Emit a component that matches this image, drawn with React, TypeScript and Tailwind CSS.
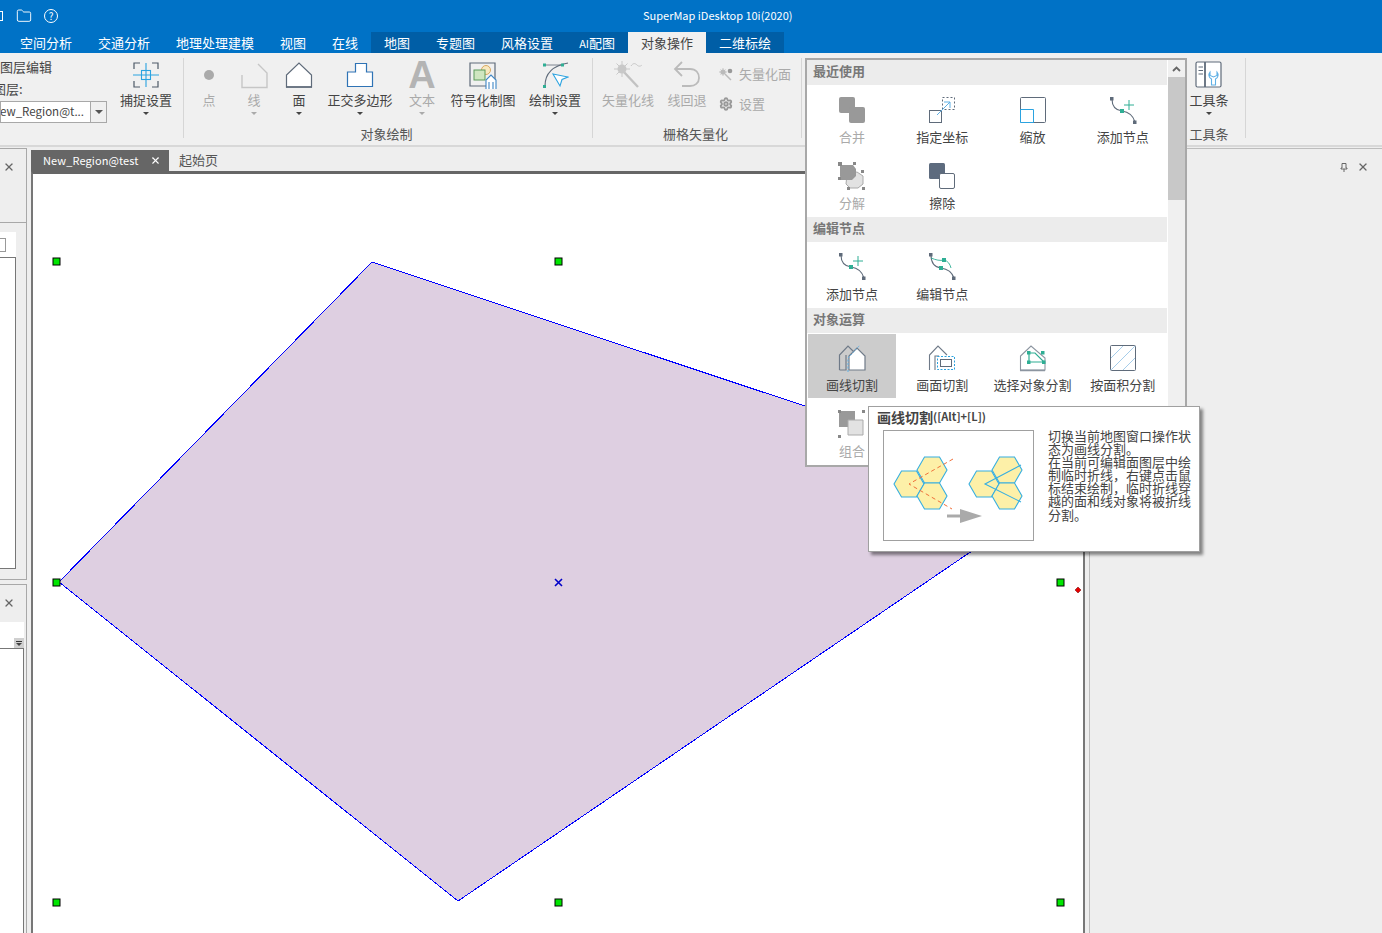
import { Folder, Settings, X } from 'lucide-react'
import type { ReactNode } from 'react'

const TABS = [
  { label: '空间分析' },
  { label: '交通分析' },
  { label: '地理处理建模' },
  { label: '视图' },
  { label: '在线' },
  { label: '地图', dark: true },
  { label: '专题图', dark: true },
  { label: '风格设置', dark: true },
  { label: '配图', prefix: 'AI', dark: true },
  { label: '对象操作', active: true },
  { label: '二维标绘', dark: true },
]

const TOOLTIP_LINES = [
  '切换当前地图窗口操作状',
  '态为画线分割。',
  '在当前可编辑面图层中绘',
  '制临时折线，右键点击鼠',
  '标结束绘制，临时折线穿',
  '越的面和线对象将被折线',
  '分割。',
]

const SLATE = '#5f6b7a'
const TEAL = '#2fae94'
const BLUE = '#2ba3e0'

function Icon({ w = 28, h = 28, children }: { w?: number; h?: number; children: ReactNode }) {
  return (
    <svg width={w} height={h} viewBox={`0 0 ${w} ${h}`} fill="none" className="block">
      {children}
    </svg>
  )
}

const SnapIcon = () => (
  <Icon>
    <path d="M8 2H2V8M20 2H26V8M2 20V26H8M26 20V26H20" stroke="#4e5a68" strokeWidth="1.2" />
    <path d="M14 2V26M1 14H27" stroke={BLUE} strokeWidth="1.1" />
    <rect x="9.5" y="9.5" width="9" height="9" stroke={BLUE} strokeWidth="1.1" />
  </Icon>
)
const PointIcon = () => (
  <Icon>
    <circle cx="14" cy="14" r="5" fill="#aaa" />
  </Icon>
)
const LineIcon = () => (
  <Icon>
    <path d="M2 14V26.5H27V12L18 3" stroke="#c6c6c6" strokeWidth="1.4" />
  </Icon>
)
const FaceIcon = () => (
  <Icon>
    <path d="M1.5 26V14L14 2L26.5 14V26Z" fill="#fff" stroke={SLATE} strokeWidth="1.2" />
    <path d="M1 26H27" stroke={SLATE} strokeWidth="1.6" />
  </Icon>
)
const OrthoIcon = () => (
  <Icon>
    <path d="M1.5 25.5V11H9.5V2.5H20.5V11H26.5V25.5Z" fill="#fff" stroke="#2f73b5" strokeWidth="1.2" />
  </Icon>
)
const SymbolIcon = () => (
  <Icon>
    <path d="M26 19V2H1V25H17" stroke={SLATE} strokeWidth="1.2" />
    <circle cx="17" cy="9" r="4.5" fill="#f8e8c0" stroke="#d9a860" />
    <rect x="5" y="9" width="11" height="10" fill="#cfe6c0" stroke="#5b9a5a" />
    <path d="M17 28V19L22 14L27 19V28M20 28V21M24 28V21" stroke="#3f87c5" strokeWidth="1.1" fill="#fff" />
  </Icon>
)
const DrawSetIcon = () => (
  <Icon>
    <path d="M4 25C4 13 10 5 27 2" stroke={SLATE} strokeWidth="1.2" />
    <path d="M2 4H21" stroke={SLATE} strokeWidth="0.8" />
    <rect x="2" y="2.5" width="3" height="3" fill={TEAL} />
    <rect x="20" y="2.5" width="3" height="3" fill={TEAL} />
    <rect x="2" y="24" width="3" height="3" fill={TEAL} />
    <path d="M12 13L27 16L21 18.5L19 25Z" fill="#fff" stroke={BLUE} strokeWidth="1.1" />
  </Icon>
)
const WandIcon = () => (
  <Icon>
    <path d="M9 10L24 26" stroke="#c2c2c2" strokeWidth="2.4" />
    <circle cx="8" cy="8" r="4.5" fill="#c8c8c8" />
    <path d="M8 0V16M0 8H16M2.5 2.5L13.5 13.5M13.5 2.5L2.5 13.5" stroke="#c8c8c8" />
    <path d="M17 5C19 2 21 2 23 4C25 6 27 5 28 4" stroke="#c8c8c8" />
  </Icon>
)
const SmallWandIcon = () => (
  <svg width="14" height="14" viewBox="0 0 14 14" fill="none" className="block">
    <circle cx="4" cy="5" r="2.6" fill="#bbb" />
    <path d="M4 1V9M0 5H8M1.500 2.500L6.500 7.500M6.500 2.500L1.500 7.500" stroke="#bbb" strokeWidth="0.8" />
    <path d="M6 7L12 13" stroke="#bbb" strokeWidth="1.500" />
    <circle cx="11" cy="4" r="2.300" fill="#999" />
  </svg>
)
const UndoIcon = () => (
  <Icon>
    <path d="M2 8H17C23 8 26 12 26 17C26 22 22 25 17 25H9" stroke="#bbb" strokeWidth="1.8" />
    <path d="M9 1L2 8L9 15" stroke="#bbb" strokeWidth="1.8" />
  </Icon>
)
const ToolbarIcon = () => (
  <Icon>
    <rect x="1" y="1" width="25" height="25" rx="1.5" fill="#fff" stroke={SLATE} strokeWidth="1.2" />
    <path d="M10 1V26" stroke={SLATE} strokeWidth="1.8" />
    <path d="M3.5 6H8M3.5 9.5H8M3.5 13H8" stroke={SLATE} />
    <path d="M15 11A4.500 4.500 0 0 0 16.500 18V24H20.500V18A4.500 4.500 0 0 0 22 11V14.500L18.500 16L15 14.500Z" stroke="#5fb0e5" strokeWidth="1.1" />
  </Icon>
)
const MergeIcon = () => (
  <Icon>
    <rect x="1" y="1" width="16" height="16" rx="2" fill="#999" />
    <rect x="11" y="11" width="16" height="16" rx="2" fill="#999" />
  </Icon>
)
const AssignIcon = () => (
  <Icon>
    <rect x="1.500" y="14.500" width="12" height="12" stroke={SLATE} fill="#fff" />
    <rect x="14.500" y="1.500" width="12" height="12" stroke={SLATE} strokeDasharray="2 2" />
    <path d="M9 19L22 6M16 6H22V12" stroke="#5fb0e5" />
  </Icon>
)
const ScaleIcon = () => (
  <Icon>
    <rect x="1.500" y="1.500" width="25" height="25" rx="1" stroke={SLATE} />
    <path d="M1.500 13.500H14.500V26.500H1.500Z" stroke={BLUE} />
  </Icon>
)
const AddNodeIcon = () => (
  <Icon>
    <path d="M3 3C3 9 5 14 13 15C20 16 24 19 26 26" stroke={SLATE} strokeWidth="1.1" />
    <rect x="1" y="1" width="3.5" height="3.5" fill={SLATE} />
    <rect x="24" y="24.500" width="3.5" height="3.5" fill={SLATE} />
    <rect x="11" y="13" width="4" height="4" fill={TEAL} />
    <path d="M20 4V14M15 9H25" stroke={TEAL} />
  </Icon>
)
const EditNodeIcon = () => (
  <Icon>
    <path d="M3 3C3 9 5 15 13 16C20 17 24 20 26 26" stroke={SLATE} strokeWidth="1.1" />
    <path d="M3 6C8 8 12 9 16 8C20 9 22 12 23 16" stroke={TEAL} strokeWidth="0.9" />
    <rect x="1" y="1" width="3.500" height="3.500" fill={SLATE} />
    <rect x="24" y="24.500" width="3.500" height="3.500" fill={SLATE} />
    <rect x="11" y="14" width="4" height="4" fill={TEAL} />
    <rect x="14" y="6" width="4" height="4" fill={TEAL} />
  </Icon>
)
const SplitIcon = () => (
  <Icon>
    <path d="M9 12L19 10L25 14V22L20 26H12L8 22Z" fill="#e2e2e2" stroke="#aaa" />
    <path d="M2 3H15L18 7V14L14 18H3L2 14Z" fill="#999" />
    <rect x="0" y="0" width="4" height="4" fill="#888" />
    <rect x="15" y="0" width="3" height="3" fill="#888" />
    <rect x="23" y="8" width="3" height="3" fill="#888" />
    <rect x="0" y="15" width="3" height="3" fill="#888" />
    <rect x="9" y="25" width="3" height="3" fill="#888" />
    <rect x="24" y="25" width="3" height="3" fill="#888" />
  </Icon>
)
const EraseIcon = () => (
  <Icon>
    <rect x="1" y="1" width="16" height="16" rx="1.500" fill="#5d6b7e" />
    <rect x="11.500" y="11.500" width="15" height="15" rx="1.500" fill="#fff" stroke={SLATE} />
  </Icon>
)
const LineCutIcon = () => (
  <Icon>
    <path d="M1.500 26V11L10 2L17 9" stroke="#6f7a88" strokeWidth="1.2" />
    <path d="M1.500 26H8V11" stroke="#6f7a88" strokeWidth="1.2" />
    <path d="M11 26V12L19 4L27 12V26Z" fill="#fff" stroke="#6f7a88" strokeWidth="1.2" />
    <path d="M10 28V14L22 1" stroke="#5fb0e5" strokeDasharray="2 1.500" />
  </Icon>
)
const FaceCutIcon = () => (
  <Icon>
    <path d="M1.500 26V11L10 2L19 11M7 26V12H11" stroke="#6f7a88" strokeWidth="1.1" />
    <rect x="9.500" y="12.500" width="17" height="13" fill="#fff" stroke={BLUE} strokeDasharray="2 1.500" />
    <rect x="12.500" y="15.500" width="11" height="7" stroke={SLATE} />
  </Icon>
)
const SelectCutIcon = () => (
  <Icon>
    <path d="M1.500 26V12L12 2L26 14V26Z" fill="#fff" stroke="#8c95a0" strokeWidth="1.1" />
    <path d="M1 26.500H26" stroke="#8c95a0" strokeWidth="1.500" />
    <path d="M10 9H16L25 18H10Z" stroke={TEAL} strokeWidth="1.200" />
    <rect x="8" y="7" width="3.500" height="3.500" fill={TEAL} />
    <rect x="22" y="7" width="3.500" height="3.500" fill={TEAL} />
    <rect x="8" y="16.500" width="3.500" height="3.500" fill={TEAL} />
    <rect x="23" y="16.500" width="3.500" height="3.500" fill={TEAL} />
  </Icon>
)
const AreaCutIcon = () => (
  <Icon>
    <rect x="1.500" y="1.500" width="25" height="25" rx="1" stroke={SLATE} />
    <path d="M2 14L14 2M2 26L26 2M14 26L26 14" stroke="#a6cdea" />
  </Icon>
)
const CombineIcon = () => (
  <Icon>
    <rect x="1" y="1" width="16" height="16" fill="#999" />
    <path d="M10 10H25V25H10Z" fill="#e2e2e2" stroke="#aaa" />
    <rect x="0" y="0" width="3" height="3" fill="#888" />
    <rect x="24" y="0" width="3" height="3" fill="#888" />
    <rect x="0" y="25" width="3" height="3" fill="#888" />
  </Icon>
)

function Caret({ dim }: { dim?: boolean }) {
  return (
    <span className={`block h-0 w-0 border-x-[3px] border-t-[3px] border-x-transparent ${dim ? 'border-t-[#aaa]' : 'border-t-[#444]'}`} />
  )
}

function RibbonButton({ label, width, dim, caret, children }: {
  label: string
  width: string
  dim?: boolean
  caret?: boolean
  children: ReactNode
}) {
  return (
    <div className={`flex shrink-0 flex-col items-center pt-[8px] ${width}`}>
      <div className="flex h-[28px] items-center justify-center">{children}</div>
      <div className={`mt-[2px] whitespace-nowrap text-[13px] leading-[18px] ${dim ? 'text-[#aaa]' : 'text-[#444]'}`}>{label}</div>
      {caret && <div className="mt-[3px]"><Caret dim={dim} /></div>}
    </div>
  )
}

function RibbonGroup({ label, width, labelClass, children }: {
  label: string
  width: string
  labelClass?: string
  children: ReactNode
}) {
  return (
    <div className={`flex h-[92px] shrink-0 flex-col justify-between ${width}`}>
      <div className="flex items-start">{children}</div>
      <div className={`mb-[2px] text-center text-[13px] leading-[18px] text-[#555] ${labelClass ?? ''}`}>{label}</div>
    </div>
  )
}

const RibbonSep = () => <div className="mt-[5px] h-[80px] w-[1px] shrink-0 bg-[#d6d6d6]" />

function MenuHeader({ label }: { label: string }) {
  return <div className="h-[25px] w-[360px] bg-[#ececec] pl-[6px] text-[13px] font-bold leading-[22px] text-[#777]">{label}</div>
}

function MenuItem({ label, dim, hover, tight, children }: {
  label: string
  dim?: boolean
  hover?: boolean
  tight?: boolean
  children: ReactNode
}) {
  return (
    <div className={`flex h-[66px] w-[90px] flex-col items-center ${hover ? 'border border-white bg-[#cccccc] pt-[10px]' : tight ? 'pt-[10px]' : 'pt-[11px]'}`}>
      {children}
      <div className={`whitespace-nowrap text-[13px] leading-[18px] ${tight ? 'mt-[5px]' : 'mt-[4px]'} ${dim ? 'text-[#aaa]' : 'text-[#444]'}`}>{label}</div>
    </div>
  )
}

function CloseX() {
  return <X size={12} strokeWidth={2.6} className="text-[#666]" />
}

function Handle({ x, y }: { x: number; y: number }) {
  return <rect x={x - 3.5} y={y - 3.5} width="7" height="7" fill="#00e600" stroke="#000" strokeWidth="1" />
}

function MapCanvas() {
  // page coords minus the canvas origin (33, 174)
  const ox = 33
  const oy = 174
  const pts = [[372, 262], [1060, 491], [458, 901], [59, 582]]
    .map(([x, y]) => `${x - ox},${y - oy}`)
    .join(' ')
  const handles = [[56, 261], [558, 261], [56, 582], [1060, 582], [56, 902], [558, 902], [1060, 902]]
  return (
    <svg width="1050" height="759" viewBox="0 0 1050 759" className="block">
      <polygon points={pts} fill="#decfe1" stroke="#0000ff" strokeWidth="1" shapeRendering="crispEdges" />
      {handles.map(([x, y]) => <Handle key={`${x}-${y}`} x={x - ox + 0.5} y={y - oy + 0.5} />)}
      <path d={`M${558 - ox - 3} ${582 - oy - 3}l7 7m0 -7l-7 7`} stroke="#0000c8" strokeWidth="1.6" />
      <path d={`M${1078 - ox} ${590 - oy - 3}l3 3l-3 3l-3 -3z`} fill="#e60000" stroke="#600" strokeWidth="0.5" />
    </svg>
  )
}

function hex(cx: number, cy: number) {
  return `${cx - 15},${cy} ${cx - 7.5},${cy - 13} ${cx + 7.5},${cy - 13} ${cx + 15},${cy} ${cx + 7.5},${cy + 13} ${cx - 7.5},${cy + 13}`
}

function TooltipPicture() {
  const centers = [[25, 53], [48, 39], [48, 65], [100, 53], [123, 39], [123, 65]]
  return (
    <svg width="149" height="109" viewBox="0 0 149 109" fill="none" className="block">
      {centers.map(([x, y]) => <polygon key={`${x}-${y}`} points={hex(x, y)} fill="#fdf0a8" stroke="#36aee0" strokeWidth="1.100" />)}
      <path d="M69 28L25 53L68 78" stroke="#f0703a" strokeDasharray="4 3" />
      <path d="M137 34L101 53L137 71" stroke="#36aee0" strokeWidth="1.100" />
      <path d="M63 85H76" stroke="#aaa" strokeWidth="3" />
      <path d="M76 78L98 85L76 92Z" fill="#aaa" />
    </svg>
  )
}

export default function App() {
  return (
    <div className="relative flex h-[933px] w-[1382px] flex-col overflow-hidden bg-[#eeeeee] [font-family:'Noto_Sans_CJK_SC','Noto_Sans',sans-serif]">
      {/* title bar */}
      <div className="flex h-[32px] shrink-0 items-center bg-[#0072c6] text-white">
        <div className="h-[10px] w-[3px] border-y border-r border-white" />
        <Folder size={16} strokeWidth={1.4} className="ml-[13px]" />
        <div className="ml-[12px] flex h-[14px] w-[14px] items-center justify-center rounded-full border border-white text-[10px] leading-none">?</div>
        <div className="mb-[1px] ml-[585px] whitespace-nowrap text-[11px] leading-none">SuperMap iDesktop 10i(2020)</div>
      </div>

      {/* ribbon tabs */}
      <div className="flex h-[21px] shrink-0 bg-[#0072c6] pl-[7px]">
        {TABS.map(t => (
          <div
            key={t.label}
            className={`whitespace-nowrap px-[13px] text-[13px] leading-[21px] ${t.active ? 'bg-[#f0f0f0] text-[#444]' : t.dark ? 'bg-[#005ea6] text-white' : 'text-white'}`}
          >
            {t.prefix && <span className="text-[11px]">{t.prefix}</span>}
            {t.label}
          </div>
        ))}
      </div>

      {/* ribbon */}
      <div className="flex h-[94px] shrink-0 border-b-2 border-[#d8d8d8] bg-[#f0f0f0]">
        <div className="flex h-[92px] w-[183px] shrink-0">
          <div className="w-[108px] shrink-0">
            <div className="pt-[5px] text-[13px] leading-[18px] text-[#444]">图层编辑</div>
            <div className="-ml-[7px] mt-[4px] text-[13px] leading-[18px] text-[#444]">图层:</div>
            <div className="mt-[3px] flex h-[22px] w-[107px] items-center overflow-hidden border border-[#a8a8a8] bg-white">
              <span className="-ml-[1px] mb-[1px] w-[90px] whitespace-nowrap text-[11.500px] leading-none text-[#444]">ew_Region@t...</span>
              <div className="ml-auto flex h-full w-[16px] items-center justify-center border-l border-[#a8a8a8] bg-[#f0f0f0]"><span className="block h-0 w-0 border-x-[4px] border-t-[4px] border-x-transparent border-t-[#555]" /></div>
            </div>
          </div>
          <RibbonButton label="捕捉设置" width="w-[76px]" caret><SnapIcon /></RibbonButton>
        </div>
        <RibbonSep />
        <RibbonGroup label="对象绘制" width="w-[408px]" labelClass="pr-[3px]">
          <div className="w-[3px]" />
          <RibbonButton label="点" width="w-[44px]" dim><PointIcon /></RibbonButton>
          <RibbonButton label="线" width="w-[46px]" dim caret><LineIcon /></RibbonButton>
          <RibbonButton label="面" width="w-[44px]" caret><FaceIcon /></RibbonButton>
          <RibbonButton label="正交多边形" width="w-[78px]" caret><OrthoIcon /></RibbonButton>
          <RibbonButton label="文本" width="w-[46px]" dim caret>
            <span className="text-[38px] font-bold leading-[28px] text-[#b4b4b4] [font-family:'Liberation_Sans',sans-serif]">A</span>
          </RibbonButton>
          <RibbonButton label="符号化制图" width="w-[76px]"><SymbolIcon /></RibbonButton>
          <RibbonButton label="绘制设置" width="w-[68px]" caret><DrawSetIcon /></RibbonButton>
        </RibbonGroup>
        <RibbonSep />
        <RibbonGroup label="栅格矢量化" width="w-[208px]" labelClass="pr-[3px]">
          <div className="w-[3px]" />
          <RibbonButton label="矢量化线" width="w-[64px]" dim><WandIcon /></RibbonButton>
          <RibbonButton label="线回退" width="w-[54px]" dim><UndoIcon /></RibbonButton>
          <div className="flex w-[84px] flex-col gap-[12px] pl-[5px] pt-[12px] text-[13px] leading-[18px] text-[#aaa]">
            <div className="flex items-center gap-[6px] whitespace-nowrap"><SmallWandIcon />矢量化面</div>
            <div className="flex items-center gap-[6px] whitespace-nowrap"><Settings size={14} strokeWidth={3.2} className="text-[#999]" />设置</div>
          </div>
        </RibbonGroup>
        <RibbonSep />
        <div className="w-[377px] shrink-0" />
        <RibbonGroup label="工具条" width="w-[60px]">
          <RibbonButton label="工具条" width="w-[60px]" caret><ToolbarIcon /></RibbonButton>
        </RibbonGroup>
        <div className="w-[6px] shrink-0" />
        <RibbonSep />
      </div>

      {/* body */}
      <div className="flex min-h-0 flex-1">
        {/* left docks, cut by the window edge */}
        <div className="flex w-[27px] shrink-0 flex-col gap-[4px] pt-[1px]">
          <div className="flex h-[432px] flex-col border-y border-r border-[#a8a8a8]">
            <div className="flex h-[74px] shrink-0 items-start border-b border-[#a8a8a8] pl-[3px] pt-[12px]"><CloseX /></div>
            <div className="mt-[9px] flex h-[25px] w-[16px] shrink-0 items-center bg-white"><span className="block h-[14px] w-[6px] border-y border-r border-[#999]" /></div>
            <div className="h-[312px] w-[16px] border-y border-r border-[#777] bg-white" />
          </div>
          <div className="flex min-h-0 flex-1 flex-col border-t border-r border-[#a8a8a8]">
            <div className="h-[37px] shrink-0 pl-[3px] pt-[12px]"><CloseX /></div>
            <div className="flex h-[26px] w-[24px] shrink-0 items-end bg-white">
              <div className="ml-auto flex h-[10px] w-[10px] flex-col items-center justify-center gap-[1px] bg-[#d0d0d0]">
                <span className="block h-[1px] w-[6px] bg-[#333]" />
                <Caret />
              </div>
            </div>
            <div className="min-h-0 w-[24px] flex-1 border-t border-r border-[#777] bg-white" />
          </div>
        </div>

        {/* document */}
        <div className="ml-[4px] flex w-[1054px] shrink-0 flex-col pt-[3px]">
          <div className="flex h-[21px] shrink-0 items-center text-[12px] leading-none">
            <div className="flex h-full w-[138px] items-center bg-[#666666] pl-[12px] text-[11px] tracking-[0.1px] text-white">
              New_Region@test
              <X size={11} strokeWidth={2.4} className="ml-auto mr-[8px] text-white" />
            </div>
            <span className="mb-[3px] ml-[10px] text-[13px] text-[#555]">起始页</span>
          </div>
          <div className="min-h-0 flex-1 overflow-hidden border-x-2 border-t-[3px] border-x-[#777] border-t-[#666] bg-white">
            <MapCanvas />
          </div>
        </div>

        {/* right dock */}
        <div className="ml-[4px] mt-[1px] flex min-w-0 flex-1 items-start justify-end border-l border-t border-[#bdbdbd] pr-[13px] pt-[12px]">
          <svg width="8" height="9" viewBox="0 0 8 9" className="mr-[9px] mt-[2px] block" fill="none">
            <path d="M2 0.500H6V5H7V6H1V5H2ZM4 6V9" stroke="#666" />
          </svg>
          <CloseX />
        </div>
      </div>

      {/* gallery dropdown over the ribbon */}
      <div className="absolute left-[805px] top-[58px] flex h-[409px] w-[382px] border-2 border-[#a8a8a8] bg-white">
        <div className="w-[361px] shrink-0">
          <MenuHeader label="最近使用" />
          <div className="grid grid-cols-4">
            <MenuItem label="合并" dim><MergeIcon /></MenuItem>
            <MenuItem label="指定坐标"><AssignIcon /></MenuItem>
            <MenuItem label="缩放"><ScaleIcon /></MenuItem>
            <MenuItem label="添加节点"><AddNodeIcon /></MenuItem>
            <MenuItem label="分解" dim><SplitIcon /></MenuItem>
            <MenuItem label="擦除"><EraseIcon /></MenuItem>
          </div>
          <MenuHeader label="编辑节点" />
          <div className="grid grid-cols-4">
            <MenuItem label="添加节点" tight><AddNodeIcon /></MenuItem>
            <MenuItem label="编辑节点" tight><EditNodeIcon /></MenuItem>
          </div>
          <MenuHeader label="对象运算" />
          <div className="grid grid-cols-4">
            <MenuItem label="画线切割" hover><LineCutIcon /></MenuItem>
            <MenuItem label="画面切割"><FaceCutIcon /></MenuItem>
            <MenuItem label="选择对象分割"><SelectCutIcon /></MenuItem>
            <MenuItem label="按面积分割"><AreaCutIcon /></MenuItem>
            <MenuItem label="组合" dim><CombineIcon /></MenuItem>
          </div>
        </div>
        <div className="flex w-[17px] shrink-0 flex-col bg-[#f0f0f0]">
          <div className="flex h-[17px] shrink-0 items-center justify-center">
            <svg width="9" height="6" viewBox="0 0 9 6" fill="none"><path d="M1 5L4.500 1.500L8 5" stroke="#666" strokeWidth="1.800" /></svg>
          </div>
          <div className="h-[123px] bg-[#c8c8c8]" />
        </div>
      </div>

      {/* screen tip */}
      <div className="absolute left-[868px] top-[406px] h-[146px] w-[332px] border border-[#a0a0a0] bg-white pl-[8px] shadow-[3px_3px_3px_rgba(0,0,0,0.45)]">
        <div className="flex h-[19px] items-center whitespace-nowrap font-bold text-[#444]">
          <span className="text-[14px] leading-none">画线切割</span>
          <span className="text-[11px] leading-none">([Alt]+[L])</span>
        </div>
        <div className="mt-[4px] flex">
          <div className="ml-[6px] h-[111px] w-[151px] shrink-0 border border-[#a0a0a0]">
            <TooltipPicture />
          </div>
          <div className="-mt-[1px] ml-[14px] whitespace-nowrap text-[13px] leading-[13.100px] text-[#444]">
            {TOOLTIP_LINES.map(l => <div key={l}>{l}</div>)}
          </div>
        </div>
      </div>
    </div>
  )
}
